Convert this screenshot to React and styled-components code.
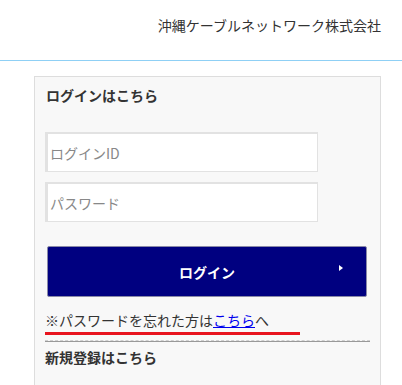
import React from "react";
import styled, { createGlobalStyle } from "styled-components";

const Global = createGlobalStyle`
  html, body { margin: 0; padding: 0; background: #fff; }
  body { font-family: "Noto Sans CJK JP", "Noto Sans", sans-serif; color: #333; }
  * { box-sizing: border-box; }
`;

const Header = styled.header`
  height: 61px;
  border-bottom: 1px solid #8fd0f5;
  display: flex;
  justify-content: flex-end;
  align-items: flex-start;
  padding: 15px 21px 0 0;
  font-size: 14px;
  line-height: 20px;
  color: #333;
`;

const Panel = styled.section`
  margin: 15px 0 0 34px;
  width: 347px;
  height: 320px;
  background: #f8f8f8;
  border: 1px solid #ddd;
  border-bottom: none;
  padding: 8px 10px 0 10px;
  display: flex;
  flex-direction: column;
`;

const Title = styled.h2`
  margin: 0 0 0 1px;
  font-size: 14px;
  font-weight: bold;
  line-height: 20px;
  color: #333;
`;

const Form = styled.div`
  margin-top: 27px;
  display: flex;
  flex-direction: column;
  gap: 10px;
`;

const Input = styled.input`
  width: 273px;
  height: 40px;
  border-style: solid;
  border-color: #e2e2e2;
  border-width: 2px 1px 1px 3px;
  background: #fff;
  padding: 0 2px;
  font-family: inherit;
  font-size: 14px;
  color: #333;
  outline: none;
  &::placeholder { color: #888; }
`;

const Button = styled.button`
  position: relative;
  margin: 24px 0 0 2px;
  width: 320px;
  height: 51px;
  background: #000080;
  border: 1px solid #8a8aa8;
  border-radius: 2px;
  color: #fff;
  font-family: inherit;
  font-size: 14px;
  font-weight: bold;
  display: flex;
  align-items: center;
  justify-content: center;
  padding: 0;
  &::after {
    content: "";
    position: absolute;
    right: 23px;
    top: 18px;
    border-left: 4px solid #fff;
    border-top: 3.5px solid transparent;
    border-bottom: 3.5px solid transparent;
  }
`;

const Forgot = styled.p`
  margin: 13px 0 0 0;
  width: 255px;
  font-size: 14px;
  line-height: 20px;
  padding-bottom: 2px;
  border-bottom: 3px solid #e8141e;
  color: #333;
  & a { color: #0000ee; text-decoration: underline; }
`;

const Separator = styled.hr`
  margin: 5px 0 0 0;
  width: 325px;
  height: 2px;
  border: none;
  border-top: 1px dashed #d0d0d0;
  border-bottom: 1px solid #999;
`;

const SubTitle = styled.h3`
  margin: 5px 0 0 0;
  font-size: 14px;
  font-weight: bold;
  line-height: 20px;
  color: #333;
`;

export default function App() {
  return (
    <>
      <Global />
      <Header>沖縄ケーブルネットワーク株式会社</Header>
      <Panel>
        <Title>ログインはこちら</Title>
        <Form>
          <Input placeholder="ログインID" />
          <Input type="password" placeholder="パスワード" />
        </Form>
        <Button>ログイン</Button>
        <Forgot>
          ※パスワードを忘れた方は<a href="#">こちら</a>へ
        </Forgot>
        <Separator />
        <SubTitle>新規登録はこちら</SubTitle>
      </Panel>
    </>
  );
}
